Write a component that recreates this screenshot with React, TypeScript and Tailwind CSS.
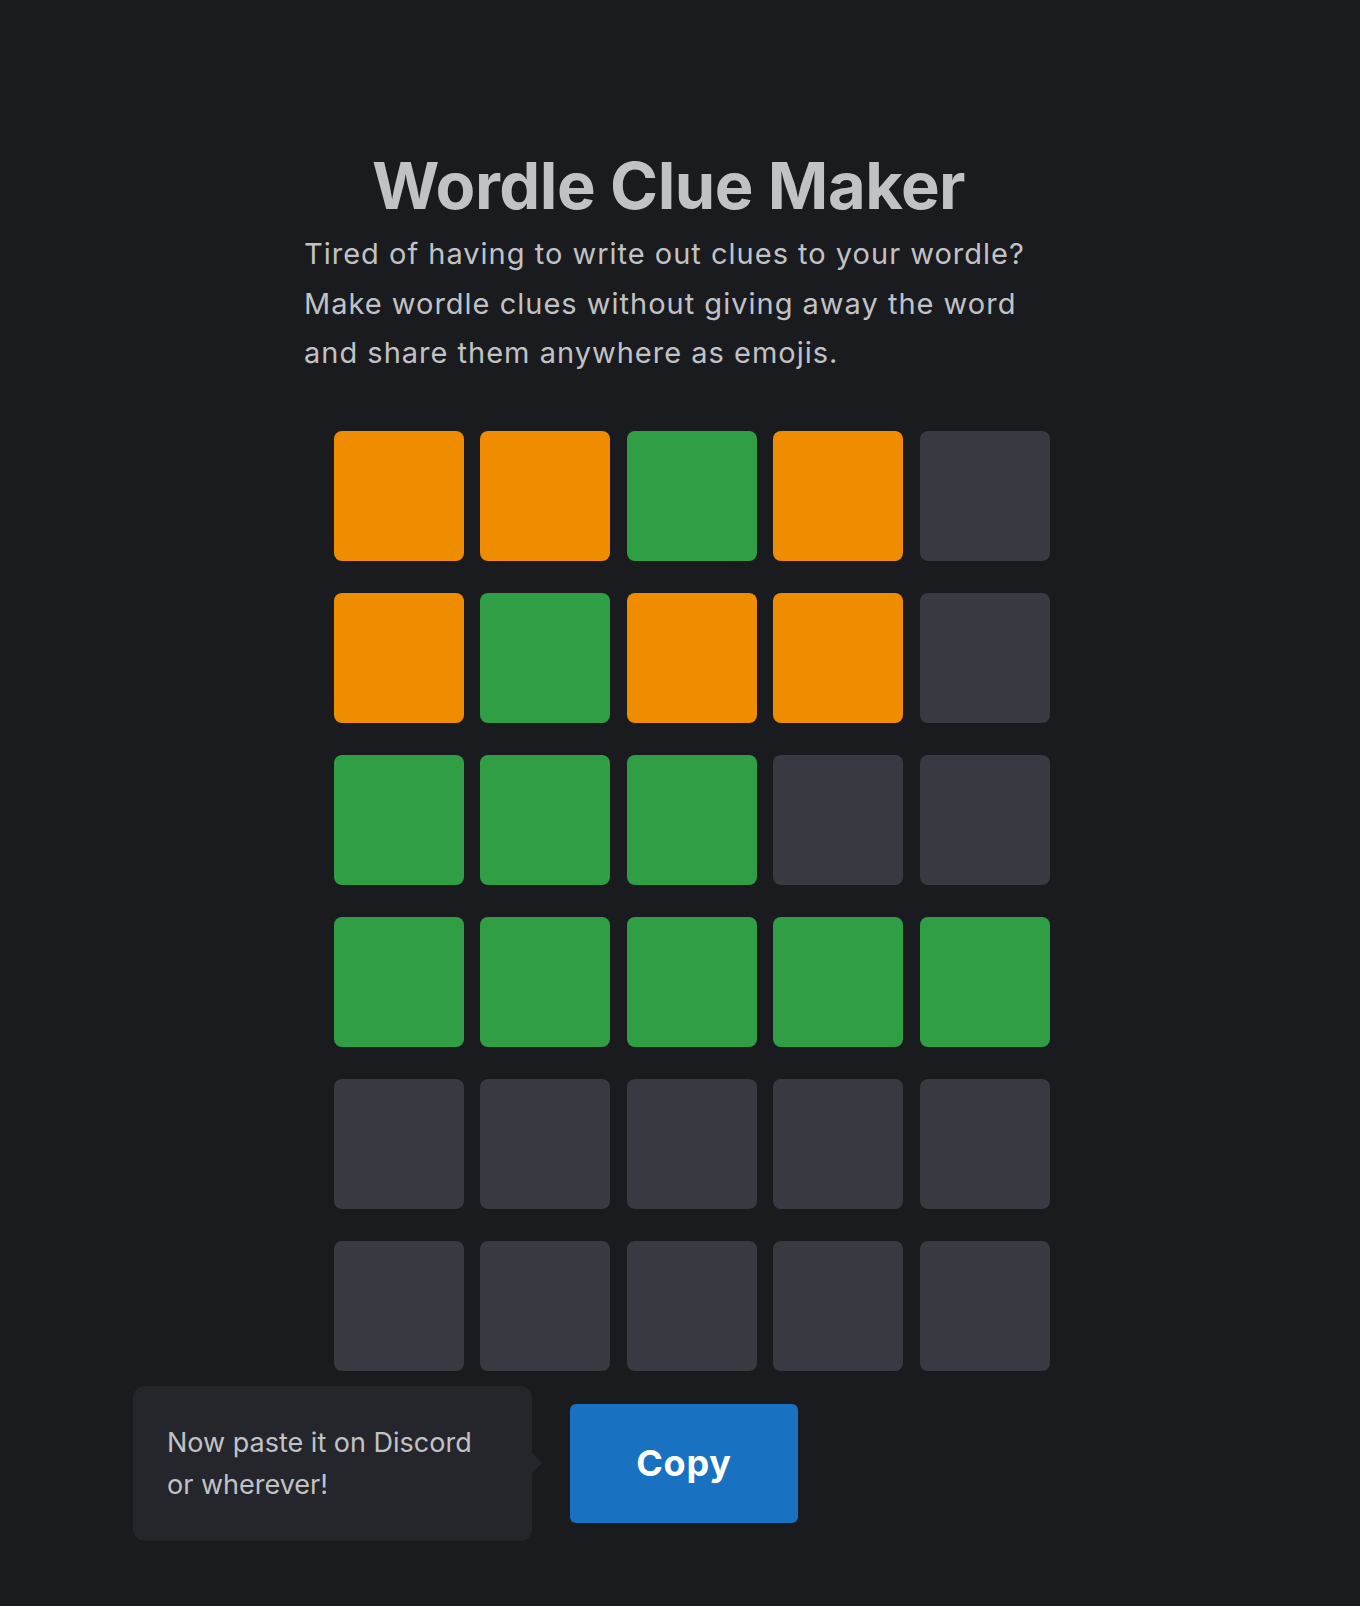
import React from "react";

const O = "bg-[#f08c00]";
const G = "bg-[#2f9e44]";
const D = "bg-[#373a40]";

const rows: string[][] = [
  [O, O, G, O, D],
  [O, G, O, O, D],
  [G, G, G, D, D],
  [G, G, G, G, G],
  [D, D, D, D, D],
  [D, D, D, D, D],
];

export default function App() {
  return (
    <div
      className="min-h-screen w-full bg-[#1a1b1e] text-[#c1c2c5]"
      style={{ fontFamily: "Inter, 'Noto Sans', sans-serif" }}
    >
      <div className="pt-[153px] w-[1360px]">
        <h1 className="ml-[304px] w-[729px] text-center text-[65px] leading-none font-bold tracking-[-0.5px] text-[#c1c2c5]">
          Wordle Clue Maker
        </h1>
        <p className="ml-[304px] mt-[11px] w-[780px] text-[29px] leading-[49.5px] tracking-[1px] text-[#c1c2c5]">
          Tired of having to write out clues to your wordle?
          <br />
          Make wordle clues without giving away the word
          <br />
          and share them anywhere as emojis.
        </p>
        <div className="ml-[334px] mt-[53px] grid grid-cols-[repeat(5,130px)] gap-x-[16.4px] gap-y-[32px]">
          {rows.flatMap((r, i) =>
            r.map((c, j) => (
              <div key={`${i}-${j}`} className={`h-[130px] w-[130px] rounded-[8px] ${c}`} />
            ))
          )}
        </div>
        <div className="ml-[133px] mt-[15px] flex items-center">
          <div className="relative w-[399px] rounded-[12px] bg-[#25262b] pl-[34px] pr-[30px] pt-[36px] pb-[35px] text-[27px] leading-[42px] text-[#c1c2c5]">
            Now paste it on Discord
            <br />
            or wherever!
            <div className="absolute right-[-7px] top-1/2 h-[15px] w-[15px] -translate-y-1/2 rotate-45 bg-[#25262b]" />
          </div>
          <button className="ml-[38px] flex h-[119px] w-[228px] items-center justify-center rounded-[6px] bg-[#1971c2] text-[36px] font-bold tracking-[0.8px] text-white">
            Copy
          </button>
        </div>
      </div>
    </div>
  );
}
